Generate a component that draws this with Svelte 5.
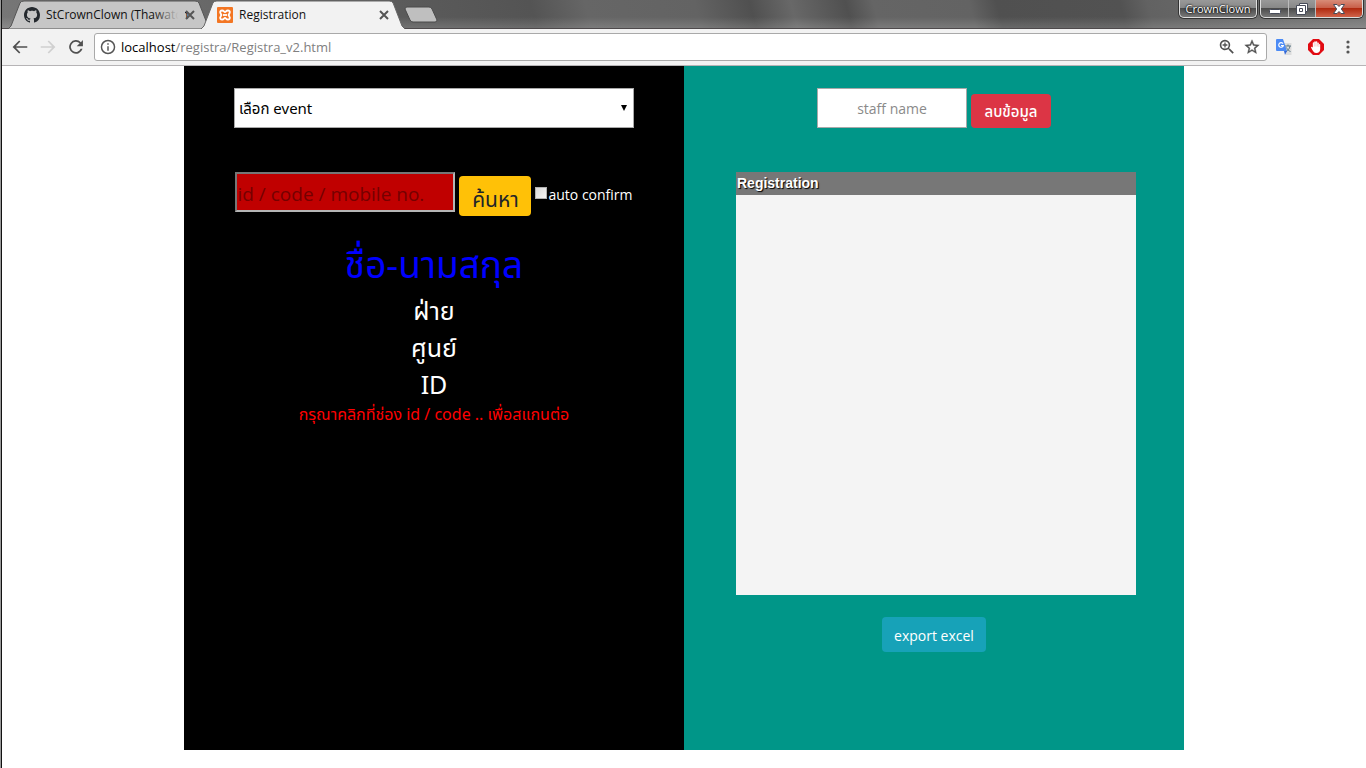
<script>
  let event = $state('');
  let code = $state('');
  let staff = $state('');
  let autoConfirm = $state(false);
</script>

<div class="window">
  <header class="titlebar">
    <nav class="tabs" aria-label="Tabs">
      <div class="tab back-tab">
        <svg class="shape" viewBox="0 0 204 29" preserveAspectRatio="none" aria-hidden="true">
          <path d="M0 29 L3 26 L12 3 Q13 1 16 1 H187 Q190 1 191 3 L200 26 L204 29Z" fill="#c6c6c6" stroke="#555" />
        </svg>
        <svg class="favicon" viewBox="0 0 16 16" aria-hidden="true"><path fill="#24292e" fill-rule="evenodd" d="M8 0C3.58 0 0 3.58 0 8c0 3.54 2.29 6.53 5.47 7.59.4.07.55-.17.55-.38 0-.19-.01-.82-.01-1.49-2.01.37-2.53-.49-2.69-.94-.09-.23-.48-.94-.82-1.13-.28-.15-.68-.52-.01-.53.63-.01 1.08.58 1.23.82.72 1.21 1.87.87 2.33.66.07-.52.28-.87.51-1.07-1.78-.2-3.64-.89-3.64-3.95 0-.87.31-1.59.82-2.15-.08-.2-.36-1.02.08-2.12 0 0 .67-.21 2.2.82.64-.18 1.32-.27 2-.27s1.36.09 2 .27c1.53-1.04 2.2-.82 2.2-.82.44 1.1.16 1.92.08 2.12.51.56.82 1.27.82 2.15 0 3.07-1.87 3.75-3.65 3.95.29.25.54.73.54 1.48 0 1.07-.01 1.93-.01 2.2 0 .21.15.46.55.38A8.01 8.01 0 0 0 16 8c0-4.42-3.58-8-8-8z" /></svg>
        <span class="tab-title faded">StCrownClown (Thawatch</span>
        <button class="tab-close" aria-label="Close StCrownClown"><svg viewBox="0 0 10 10"><path d="M1 1l8 8M9 1L1 9" stroke="#555" stroke-width="2" /></svg></button>
      </div>
      <div class="tab front-tab">
        <svg class="shape" viewBox="0 0 206 29" preserveAspectRatio="none" aria-hidden="true">
          <path d="M0 29 L3 26 L12 3 Q13 1 16 1 H190 Q193 1 194 3 L203 26 L206 29Z" fill="#f2f2f2" />
          <path d="M0 29 L3 26 L12 3 Q13 1 16 1 H190 Q193 1 194 3 L203 26 L206 29" fill="none" stroke="#666" />
        </svg>
        <svg class="favicon" viewBox="0 0 16 16" aria-hidden="true">
          <rect width="16" height="16" rx="1" fill="#f37623" />
          <path d="M5.200 3.500c-1.800 0-2.500 1.300-1.800 2.500l1 2-1 2c-.7 1.200 0 2.500 1.800 2.500 1.700 0 1.800-1.500 2.800-1.500s1.100 1.500 2.800 1.500c1.800 0 2.500-1.300 1.800-2.500l-1-2 1-2c.7-1.200 0-2.500-1.800-2.500C9.100 3.500 9 5 8 5S6.900 3.500 5.200 3.500z" fill="none" stroke="#fff" stroke-width="1.800" />
          <path d="M6 8h4" stroke="#fff" stroke-width="1.800" />
        </svg>
        <span class="tab-title">Registration</span>
        <button class="tab-close" aria-label="Close Registration"><svg viewBox="0 0 10 10"><path d="M1 1l8 8M9 1L1 9" stroke="#555" stroke-width="2" /></svg></button>
      </div>
      <button class="new-tab" aria-label="New tab">
        <svg viewBox="0 0 34 17"><path d="M3 1H25Q27 1 28 3L33 14Q33 16 31 16H9Q7 16 6 14L1 3Q1 1 3 1Z" fill="#bfbfbf" stroke="#4b4b4b" /></svg>
      </button>
    </nav>
    <div class="window-controls">
      <button class="glass user">CrownClown</button>
      <div class="glass control-set">
        <button class="minimize" aria-label="Minimize"><svg viewBox="0 0 14 14"><rect x="1.500" y="7.500" width="11" height="4" rx="1" fill="#fff" stroke="#474b58" /></svg></button>
        <button class="restore" aria-label="Restore"><svg viewBox="0 0 14 14"><path d="M4.500 1.500h8v8h-2v3h-9v-9h3z" fill="#fff" stroke="#474b58" /><path d="M4.500 6.500h3v3h-3zM4.500 3.500h6v6" fill="none" stroke="#474b58" /></svg></button>
        <button class="close" aria-label="Close"><svg viewBox="0 0 14 14"><path d="M1.500 2.500h3.500l2 2 2-2h3.500L9.300 7l3.200 4.500H9l-2-2-2 2H1.500L4.700 7z" fill="#fff" stroke="#474b58" /></svg></button>
      </div>
    </div>
  </header>

  <div class="toolbar">
    <button class="tool" aria-label="Back"><svg viewBox="1 1 22 22"><path fill="#505050" d="M22 10.800H6.300l6.200-6.200L10.800 3 1.800 12l9 9 1.700-1.600-6.200-6.200H22z" /></svg></button>
    <button class="tool" aria-label="Forward"><svg viewBox="1 1 22 22"><path fill="#d0d0d0" d="M2 10.800h15.700l-6.200-6.200L13.200 3l9 9-9 9-1.700-1.600 6.200-6.200H2z" /></svg></button>
    <button class="tool" aria-label="Reload"><svg viewBox="1 1 22 22"><path fill="#505050" d="M18.700 5.300A9.400 9.400 0 1 0 21 14.500h-2.600A7 7 0 1 1 17 7l-4 4h8.500V2.500z" /></svg></button>
    <div class="address">
      <svg viewBox="1 1 22 22" aria-hidden="true"><path fill="#555" d="M11 17h2v-6h-2v6zm1-15a10 10 0 1 0 0 20 10 10 0 0 0 0-20zm0 18a8 8 0 1 1 0-16 8 8 0 0 1 0 16zM11 9h2V7h-2v2z" /></svg>
      <a class="url" href="#registration"><span>localhost</span>/registra/Registra_v2.html</a>
      <button class="tool small" aria-label="Zoom"><svg viewBox="2 2 20 20"><path fill="#505050" d="M15.500 14h-.8l-.3-.3A6.500 6.500 0 1 0 13.700 14.400l.3.300v.8l5 5 1.500-1.500-5-5zm-6 0a4.500 4.500 0 1 1 0-9 4.500 4.500 0 0 1 0 9zM10.300 6.500H8.700v2.200H6.500v1.600h2.200v2.200h1.600v-2.200h2.200V8.700h-2.200z" /></svg></button>
      <button class="tool small" aria-label="Bookmark"><svg viewBox="1 1 22 22"><path fill="#505050" stroke="#505050" stroke-width=".5" d="M22 9.200l-7.200-.6L12 2 9.200 8.600 2 9.200l5.500 4.800L5.800 21l6.200-3.700 6.200 3.700-1.600-7L22 9.200zM12 15.400l-3.800 2.300 1-4.300-3.300-2.900 4.400-.4L12 6.100l1.700 4 4.400.4-3.300 2.900 1 4.300-3.800-2.300z" /></svg></button>
    </div>
    <div class="extensions">
      <button class="tool" aria-label="Translate"><svg viewBox="0 0 16 16"><path d="M6 4h9.500v12H10z" fill="#dcdcdc" /><path d="M9 7h6M12 5.500V7M14 7c-.5 3-2 4.500-4 5.500M10.500 8.500c.8 2 2 3.200 4 4" stroke="#607d8b" fill="none" /><path d="M1 0h6l4 12H1a1 1 0 0 1-1-1V1a1 1 0 0 1 1-1z" fill="#4c8bf5" /><path d="M8 12h3l-2 4z" fill="#3367d6" /><path d="M7 4.700A2.300 2.300 0 1 0 7.300 6.500H5" fill="none" stroke="#fff" stroke-width="1.200" /></svg></button>
      <button class="tool" aria-label="Ad blocker"><svg viewBox="0 0 16 16"><path d="M5 0h6l5 5v6l-5 5H5l-5-5V5z" fill="#e10b12" /><path d="M3 8.500c.2-1 1.300-1 1.800.2V4c0-.9 1.300-.9 1.400 0V3c.1-.9 1.500-.9 1.600 0v-.3c.2-.8 1.500-.7 1.500.1V4c.2-.8 1.500-.7 1.500.1v1.400c.2-.8 1.400-.7 1.400.1V10c0 2.500-1.500 4-3.700 4-2.800 0-3.700-2-5.500-5.500z" fill="#fff" /><path d="M6.300 4v3.500M7.900 3.500v4M9.400 4v3.500M10.900 5v3" stroke="#e88" stroke-width=".4" /></svg></button>
      <button class="tool" aria-label="Menu"><svg viewBox="0 0 16 16" fill="#555"><circle cx="8" cy="3" r="1.600" /><circle cx="8" cy="8" r="1.600" /><circle cx="8" cy="13" r="1.600" /></svg></button>
    </div>
  </div>

  <main class="page" id="registration">
    <section class="panel search-panel">
      <div class="select-wrap">
        <select bind:value={event} aria-label="event">
          <option value="">เลือก event</option>
        </select>
        <svg viewBox="0 0 6 6" aria-hidden="true"><path d="M0 0h6L3 6z" /></svg>
      </div>
      <form class="search-row" onsubmit={(e) => e.preventDefault()}>
        <input class="code" bind:value={code} placeholder="id / code / mobile no." aria-label="id / code / mobile no." />
        <button class="btn find">ค้นหา</button>
        <label class="confirm"><input type="checkbox" bind:checked={autoConfirm} />auto confirm</label>
      </form>
      <div class="person">
        <h1>ชื่อ-นามสกุล</h1>
        <p>ฝ่าย</p>
        <p>ศูนย์</p>
        <p>ID</p>
        <p class="warning">กรุณาคลิกที่ช่อง id / code .. เพื่อสแกนต่อ</p>
      </div>
    </section>

    <section class="panel staff-panel">
      <div class="staff-row">
        <input class="staff" bind:value={staff} placeholder="staff name" aria-label="staff name" />
        <button class="btn delete">ลบข้อมูล</button>
      </div>
      <table>
        <thead><tr><th>Registration</th></tr></thead>
        <tbody><tr><td></td></tr></tbody>
      </table>
      <button class="btn export">export excel</button>
    </section>
  </main>
</div>

<style>
  :global(body) {
    margin: 0;
    background: #fff;
  }
  * {
    box-sizing: border-box;
  }
  button {
    border: 0;
    padding: 0;
    background: none;
    font-family: inherit;
    color: inherit;
  }
  svg {
    display: block;
  }
  .window {
    display: flex;
    flex-direction: column;
    min-height: 100vh;
    padding-left: 1px;
    border-left: 1px solid #999;
    background: linear-gradient(90deg, #111 1px, #fff 1px);
    font-family: "Noto Sans", "Open Sans", "Noto Sans Thai", sans-serif;
  }

  /* Title bar */
  .titlebar {
    display: flex;
    justify-content: space-between;
    height: 29px;
    padding-left: 6px;
    border-bottom: 1px solid #4e4a4c;
    background:
      linear-gradient(180deg, transparent 60%, rgba(255, 255, 255, 0.14)),
      linear-gradient(75deg, #777 0, #5c5c5c 28%, #545454 39%, #666 43%, #636363 51%, #505050 55%, #686868 58%, #505050 62%, #656565 64%, #636363 71%, #505050 73%, #525252 82%, #626262 84%, #777 100%);
  }
  .tabs {
    display: flex;
    height: 29px;
  }
  .tab {
    position: relative;
    display: flex;
    align-items: center;
    height: 29px;
  }
  .back-tab {
    width: 204px;
    padding: 0 17px 0 16px;
  }
  .front-tab {
    width: 204px;
    margin-left: -11px;
    padding: 0 16px;
  }
  .shape {
    position: absolute;
    inset: 0;
    width: 100%;
    height: 100%;
  }
  .favicon {
    position: relative;
    flex: none;
    width: 16px;
    height: 16px;
  }
  .tab-title {
    position: relative;
    flex: 1;
    min-width: 0;
    margin-left: 6px;
    white-space: nowrap;
    font-family: "Open Sans", sans-serif;
    font-size: 12px;
    line-height: 16px;
    color: #111;
  }
  .faded::after {
    content: "";
    position: absolute;
    inset: 0 -6px 0 auto;
    width: 32px;
    background: linear-gradient(90deg, transparent, #c6c6c6 80%);
  }
  .tab-close {
    position: relative;
    flex: none;
    width: 10px;
    height: 10px;
    margin-left: 6px;
  }
  .tab-close svg {
    width: 10px;
    height: 10px;
  }
  .new-tab {
    align-self: center;
    width: 34px;
    height: 17px;
    margin-left: -1px;
  }
  .window-controls {
    display: flex;
    align-items: flex-start;
    gap: 3px;
    padding-right: 3px;
  }
  .glass {
    height: 18px;
    border: 1px solid #ddd;
    border-top: 0;
    border-radius: 0 0 5px 5px;
    box-shadow: 0 0 0 1px #333;
    overflow: hidden;
    background: linear-gradient(#999 0, #888 45%, #4c4c4c 50%, #777);
  }
  .user {
    width: 78px;
    color: #fff;
    font-family: "Open Sans", sans-serif;
    font-size: 11px;
    line-height: 16px;
    text-shadow: 0 0 2px #000, 0 0 2px #000;
  }
  .control-set {
    display: flex;
  }
  .control-set button {
    display: grid;
    place-items: center;
    width: 28px;
    border-right: 1px solid #bbb;
  }
  .control-set svg {
    width: 14px;
    height: 14px;
  }
  .control-set .restore {
    width: 27px;
  }
  .control-set .close {
    width: 46px;
    border: 0;
    background: linear-gradient(#d88c78 0, #c9604a 45%, #b02a10 50%, #d0634a);
  }

  /* Toolbar */
  .toolbar {
    display: flex;
    align-items: center;
    height: 37px;
    padding: 0 10px;
    border-bottom: 1px solid #b6b4b6;
    background: #f2f2f2;
  }
  .tool {
    flex: none;
    width: 16px;
    height: 16px;
  }
  .toolbar > .tool {
    margin-right: 12px;
  }
  .tool svg,
  .address > svg {
    width: 16px;
    height: 16px;
  }
  .address {
    display: flex;
    flex: 1;
    align-items: center;
    height: 28px;
    margin-left: -2px;
    padding: 0 6px 0 5px;
    border: 1px solid #a9a9a9;
    border-radius: 3px;
    background: #fff;
  }
  .url {
    flex: 1;
    margin-left: 5px;
    color: #808080;
    font-family: "Open Sans", sans-serif;
    font-size: 13px;
    line-height: 20px;
    text-decoration: none;
  }
  .url span {
    color: #000;
  }
  .small {
    margin-left: 9px;
  }
  .extensions {
    display: flex;
    gap: 16px;
    margin-left: 9px;
  }

  /* Page */
  .page {
    display: grid;
    grid-template-columns: minmax(0, 1fr) minmax(0, 1fr);
    flex: 1;
    width: 100%;
    max-width: 1000px;
    margin: 0 auto 18px;
  }
  .panel {
    display: flex;
    flex-direction: column;
    align-items: center;
    padding: 22px 48px;
  }
  .search-panel {
    background: #000;
    color: #fff;
  }
  .staff-panel {
    background: #009688;
  }
  .select-wrap {
    position: relative;
    width: 100%;
    max-width: 400px;
  }
  .select-wrap svg {
    position: absolute;
    top: 17px;
    right: 7px;
    width: 6px;
    height: 6px;
    pointer-events: none;
  }
  select {
    display: block;
    appearance: none;
    width: 100%;
    height: 40px;
    padding: 0 4px;
    border: 1px solid #a9a9a9;
    border-radius: 0;
    background: #fff;
    color: #000;
    font-family: inherit;
    font-size: 15px;
  }
  .search-row,
  .staff-row {
    display: flex;
    gap: 4px;
  }
  .search-row {
    align-items: flex-start;
    margin-top: 44px;
  }
  .staff-row {
    align-items: flex-end;
  }
  .code {
    width: 220px;
    height: 40px;
    padding: 3px 0 0;
    border: 2px solid;
    border-color: #767676 #b5b5b5 #b5b5b5 #767676;
    background: #c00000;
    color: #000;
    font-family: "Open Sans", "Noto Sans Thai", sans-serif;
    font-size: 19px;
  }
  .code::placeholder {
    color: #750000;
  }
  .btn {
    border-radius: 4px;
    white-space: nowrap;
  }
  .find {
    width: 72px;
    height: 40px;
    margin-top: 4px;
    padding-top: 5px;
    background: #ffc107;
    color: #212529;
    font-size: 21px;
    line-height: 30px;
  }
  .confirm {
    display: flex;
    align-items: center;
    height: 44px;
    font-family: "Open Sans", sans-serif;
    font-size: 14px;
    white-space: nowrap;
  }
  .confirm input {
    appearance: none;
    width: 12px;
    height: 12px;
    margin: 0 1px 3px 0;
    border: 1px solid #b0b0b0;
    background: linear-gradient(135deg, #d8d8d8, #f4f4f4);
  }
  .confirm input:checked {
    background: #1976d2;
  }
  .person {
    margin-top: 20px;
    text-align: center;
  }
  h1 {
    margin: 0;
    color: #00f;
    font-size: 37px;
    font-weight: 400;
    line-height: 56px;
  }
  .person p {
    margin: 0;
    font-size: 25px;
    line-height: 37px;
  }
  .person .warning {
    color: #f00;
    font-size: 16px;
    line-height: 22px;
  }
  .staff {
    width: 150px;
    height: 40px;
    border: 1px solid #a9a9a9;
    background: #fff;
    font-family: "Open Sans", sans-serif;
    font-size: 14px;
    text-align: center;
  }
  .staff::placeholder {
    color: #8a8a8a;
  }
  .delete {
    width: 80px;
    height: 34px;
    padding-top: 2px;
    background: #dc3545;
    color: #fff;
    font-size: 15px;
    font-weight: 500;
  }
  table {
    width: 100%;
    max-width: 400px;
    margin: 44px 0 22px 4px;
    border-collapse: collapse;
    background: #f4f4f4;
  }
  th {
    height: 23px;
    padding: 0 1px;
    background: #777;
    color: #fff;
    font-family: "Liberation Sans", Arial, sans-serif;
    font-size: 14px;
    line-height: 23px;
    text-align: left;
    text-shadow: 1px 1px 1px #000;
  }
  td {
    height: 400px;
    padding: 0;
  }
  .export {
    width: 104px;
    height: 35px;
    padding-top: 2px;
    background: #17a2b8;
    color: #fff;
    font-family: "Open Sans", sans-serif;
    font-size: 14px;
  }
</style>
